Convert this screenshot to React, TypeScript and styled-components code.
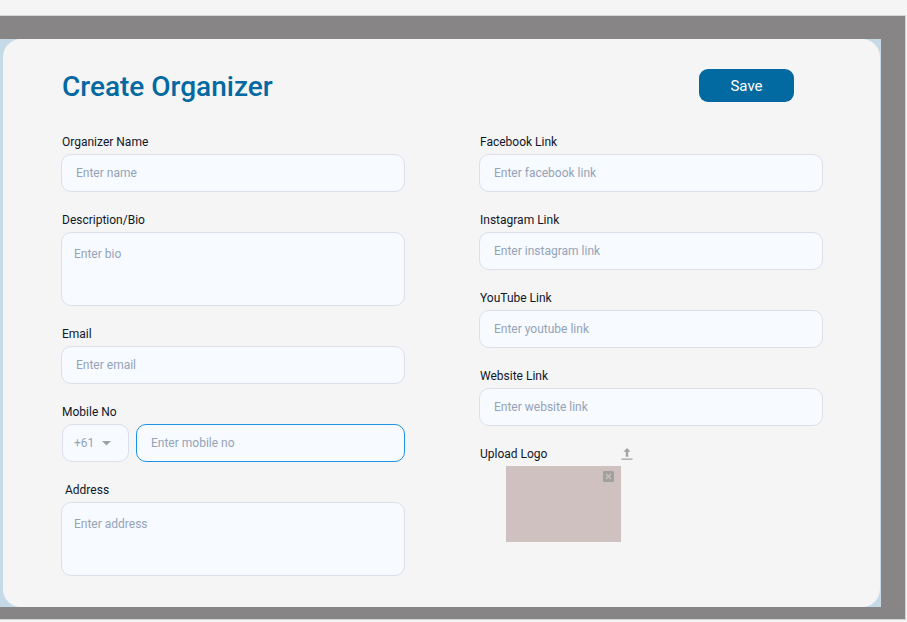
import React from "react";
import styled, { createGlobalStyle, css } from "styled-components";

const GlobalStyle = createGlobalStyle`
  *, *::before, *::after { box-sizing: border-box; }
  body {
    margin: 0;
    background: #f5f5f5;
    color: #0f172a;
    font-family: Roboto, "Liberation Sans", sans-serif;
  }
`;

const Page = styled.div`
  padding: 15px 1px 2px 0;
`;

const Backdrop = styled.div`
  padding: 23px 24px 12px 0;
  background: #888586;
  border: 1px solid #d4d4d4;
  border-left: 0;
`;

const Stage = styled.div`
  padding: 0 1px 0 3px;
  background: #c5dae6;
`;

const Card = styled.main`
  padding: 30px 57px 31px 58px;
  background: #f5f5f5;
  border-radius: 18px;
`;

const Header = styled.header`
  display: flex;
  align-items: center;
  justify-content: space-between;
  padding: 0 29px 0 1px;
`;

const Title = styled.h1`
  margin: 0;
  color: #0369a1;
  font-size: 28px;
  font-weight: 500;
  line-height: 36px;
`;

const SaveButton = styled.button`
  align-self: flex-start;
  width: 95px;
  height: 33px;
  padding: 0;
  border: 0;
  border-radius: 9px;
  background: #0369a1;
  color: #ffffff;
  font: inherit;
  font-size: 15px;
  cursor: pointer;
`;

const Columns = styled.div`
  display: grid;
  grid-template-columns: 1fr 1fr;
  column-gap: 74px;
  margin-top: 29px;
`;

const Column = styled.div`
  display: flex;
  flex-direction: column;
  gap: 20px;
`;

const Field = styled.div`
  display: flex;
  flex-direction: column;
  gap: 4px;
`;

const Label = styled.label<{ $inset?: boolean }>`
  padding-left: ${(p) => (p.$inset ? "4px" : "1px")};
  font-size: 12px;
  line-height: 16px;
`;

const control = css`
  width: 100%;
  margin: 0;
  border: 1px solid #dbdfeb;
  border-radius: 10px;
  background: #f7faff;
  color: #94a3b8;
  font: inherit;
  font-size: 12px;
  outline: none;
  &::placeholder {
    color: #94a3b8;
    opacity: 1;
  }
`;

const TextInput = styled.input<{ $active?: boolean }>`
  ${control}
  min-width: 0;
  height: 38px;
  padding: 0 14px;
  ${(p) => p.$active && "border-color: #1d92e6;"}
`;

const TextArea = styled.textarea`
  ${control}
  display: block;
  height: 74px;
  padding: 12px;
  line-height: 18px;
  resize: none;
`;

const PhoneRow = styled.div`
  display: flex;
  gap: 7px;
  padding-left: 1px;
`;

const CodePicker = styled.div`
  display: grid;
  flex: 0 0 67px;
  align-items: center;
`;

const CodeSelect = styled.select`
  ${control}
  grid-area: 1 / 1;
  height: 38px;
  padding: 0 11px;
  appearance: none;
`;

const Caret = styled.svg`
  grid-area: 1 / 1;
  justify-self: end;
  width: 9px;
  height: 5px;
  margin-right: 18px;
  fill: #9ca3a5;
  pointer-events: none;
`;

const UploadRow = styled.div`
  display: flex;
  align-items: center;
  justify-content: space-between;
  width: 154px;
`;

const IconButton = styled.button`
  display: block;
  padding: 0;
  border: 0;
  background: none;
  line-height: 0;
  cursor: pointer;
`;

const LogoPreview = styled.div`
  display: flex;
  align-items: flex-start;
  justify-content: flex-end;
  width: 115px;
  height: 76px;
  margin-left: 27px;
  padding: 5px 7px;
  background: #cfc1c0;
`;

const links = [
  { id: "facebook", label: "Facebook Link", hint: "Enter facebook link" },
  { id: "instagram", label: "Instagram Link", hint: "Enter instagram link" },
  { id: "youtube", label: "YouTube Link", hint: "Enter youtube link" },
  { id: "website", label: "Website Link", hint: "Enter website link" },
];

export default function App() {
  return (
    <>
      <GlobalStyle />
      <Page>
        <Backdrop>
          <Stage>
            <Card>
              <Header>
                <Title>Create Organizer</Title>
                <SaveButton type="submit" form="organizer">Save</SaveButton>
              </Header>
              <form id="organizer" onSubmit={(e) => e.preventDefault()}>
                <Columns>
                  <Column>
                    <Field>
                      <Label htmlFor="name">Organizer Name</Label>
                      <TextInput id="name" placeholder="Enter name" />
                    </Field>
                    <Field>
                      <Label htmlFor="bio">Description/Bio</Label>
                      <TextArea id="bio" placeholder="Enter bio" />
                    </Field>
                    <Field>
                      <Label htmlFor="email">Email</Label>
                      <TextInput id="email" type="email" placeholder="Enter email" />
                    </Field>
                    <Field>
                      <Label htmlFor="mobile">Mobile No</Label>
                      <PhoneRow>
                        <CodePicker>
                          <CodeSelect aria-label="Country code" defaultValue="+61">
                            <option>+61</option>
                          </CodeSelect>
                          <Caret viewBox="0 0 9 5" aria-hidden="true">
                            <path d="M0 0h9L4.500 4.500z" />
                          </Caret>
                        </CodePicker>
                        <TextInput id="mobile" type="tel" placeholder="Enter mobile no" $active />
                      </PhoneRow>
                    </Field>
                    <Field>
                      <Label htmlFor="address" $inset>Address</Label>
                      <TextArea id="address" placeholder="Enter address" />
                    </Field>
                  </Column>
                  <Column>
                    {links.map((link) => (
                      <Field key={link.id}>
                        <Label htmlFor={link.id}>{link.label}</Label>
                        <TextInput id={link.id} placeholder={link.hint} />
                      </Field>
                    ))}
                    <Field>
                      <UploadRow>
                        <Label htmlFor="upload">Upload Logo</Label>
                        <IconButton id="upload" type="button" aria-label="Upload logo">
                          <svg width="12" height="12" viewBox="0 0 12 12" fill="#a3a3a1">
                            <path d="M6 0l3.600 3.800H7.200v4.900H4.800V3.800H2.400zM.4 10.500h11.200v1.300H.4z" />
                          </svg>
                        </IconButton>
                      </UploadRow>
                      <LogoPreview>
                        <IconButton type="button" aria-label="Remove logo">
                          <svg width="11" height="11" viewBox="0 0 11 11">
                            <rect width="11" height="11" rx="1" fill="#a0a09e" />
                            <path d="M3 3l5 5M8 3l-5 5" stroke="#cfc1c0" strokeWidth="1.2" />
                          </svg>
                        </IconButton>
                      </LogoPreview>
                    </Field>
                  </Column>
                </Columns>
              </form>
            </Card>
          </Stage>
        </Backdrop>
      </Page>
    </>
  );
}
